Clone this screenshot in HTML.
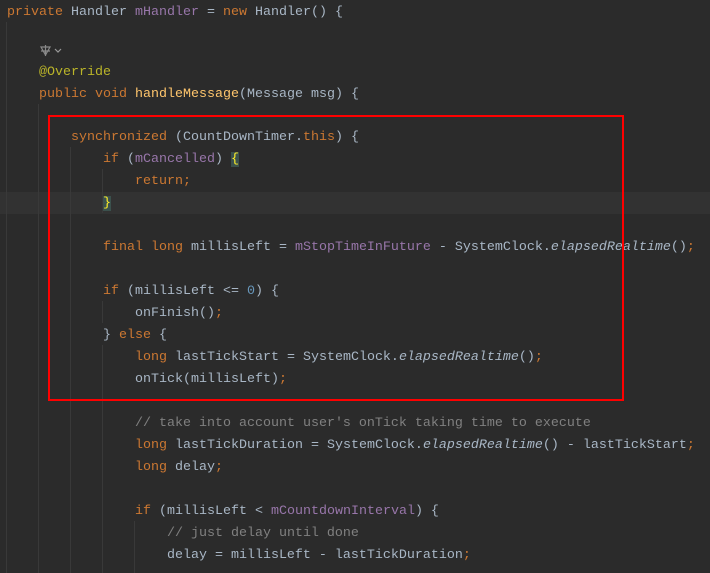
<!DOCTYPE html>
<html><head><style>
body{margin:0;width:710px;height:573px;background:#2b2b2b;overflow:hidden;position:relative;font-family:"Liberation Mono",monospace;font-size:13.33px;color:#a9b7c6}
.l{position:absolute;left:7px;height:22px;line-height:22px;white-space:pre;margin-top:2px}
.k{color:#cc7832}.f{color:#9876aa}.m{color:#ffc66d}.a{color:#bbb529}.n{color:#6897bb}.c{color:#808080}.i{font-style:italic}
.g{position:absolute;width:1px;background:#393939}
.br{background:#3b514d;color:#ffef28}
</style></head><body>
<div style="position:absolute;left:0;top:192px;width:710px;height:22px;background:#323232"></div>
<div class="g" style="left:6px;top:22px;height:551px"></div>
<div class="g" style="left:38px;top:104px;height:469px"></div>
<div class="g" style="left:70px;top:147px;height:426px"></div>
<div class="g" style="left:102px;top:169px;height:44px"></div>
<div class="g" style="left:102px;top:301px;height:22px"></div>
<div class="g" style="left:102px;top:345px;height:228px"></div>
<div class="g" style="left:134px;top:521px;height:52px"></div>
<div class="l" style="top:0"><span class="k">private </span>Handler <span class="f">mHandler</span> = <span class="k">new </span>Handler() {</div>
<svg style="position:absolute;left:39px;top:44px" width="26" height="13" viewBox="0 0 26 13"><path d="M2 3h9l-4.5 8zM6.5 1v11M2 7h9" stroke="#8a8a8a" fill="none" stroke-width="1.2"/><path d="M16 5l3 3 3-3" stroke="#9a9a9a" fill="none" stroke-width="1.2"/></svg>
<div class="l" style="top:60px">    <span class="a">@Override</span></div>
<div class="l" style="top:82px">    <span class="k">public void </span><span class="m">handleMessage</span>(Message msg) {</div>
<div class="l" style="top:125px">        <span class="k">synchronized </span>(CountDownTimer.<span class="k">this</span>) {</div>
<div class="l" style="top:147px">            <span class="k">if </span>(<span class="f">mCancelled</span>) <span class="br">{</span></div>
<div class="l" style="top:169px">                <span class="k">return;</span></div>
<div class="l" style="top:191px">            <span class="br">}</span></div>
<div class="l" style="top:235px">            <span class="k">final long </span>millisLeft = <span class="f">mStopTimeInFuture</span> - SystemClock.<span class="i">elapsedRealtime</span>()<span class="k">;</span></div>
<div class="l" style="top:279px">            <span class="k">if </span>(millisLeft &lt;= <span class="n">0</span>) {</div>
<div class="l" style="top:301px">                onFinish()<span class="k">;</span></div>
<div class="l" style="top:323px">            } <span class="k">else </span>{</div>
<div class="l" style="top:345px">                <span class="k">long </span>lastTickStart = SystemClock.<span class="i">elapsedRealtime</span>()<span class="k">;</span></div>
<div class="l" style="top:367px">                onTick(millisLeft)<span class="k">;</span></div>
<div class="l" style="top:411px">                <span class="c">// take into account user's onTick taking time to execute</span></div>
<div class="l" style="top:433px">                <span class="k">long </span>lastTickDuration = SystemClock.<span class="i">elapsedRealtime</span>() - lastTickStart<span class="k">;</span></div>
<div class="l" style="top:455px">                <span class="k">long </span>delay<span class="k">;</span></div>
<div class="l" style="top:499px">                <span class="k">if </span>(millisLeft &lt; <span class="f">mCountdownInterval</span>) {</div>
<div class="l" style="top:521px">                    <span class="c">// just delay until done</span></div>
<div class="l" style="top:543px">                    delay = millisLeft - lastTickDuration<span class="k">;</span></div>
<div style="position:absolute;left:48px;top:115px;width:572px;height:282px;border:2px solid #ff0000"></div>
</body></html>
